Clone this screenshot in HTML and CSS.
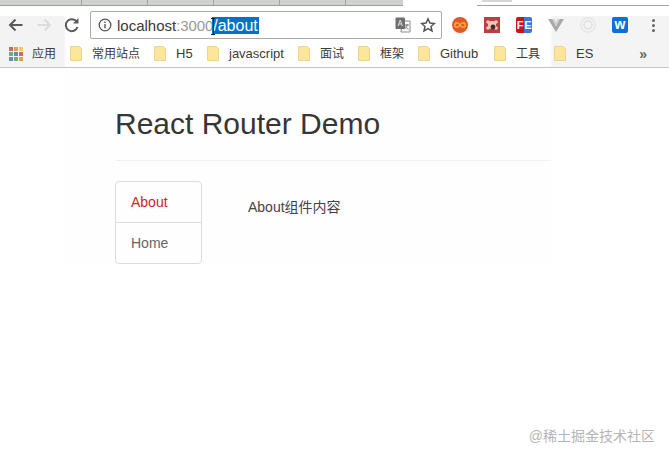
FILE: index.html
```html
<!DOCTYPE html>
<html lang="en">
<head>
<meta charset="utf-8">
<title>React Router Demo</title>
<link rel="stylesheet" href="styles.css">
</head>
<body>
<header class="chrome">
  <div class="tabstrip">
    <span class="tab tab-a"></span><span class="tab tab-b"></span><span class="tab tab-c"></span><span class="tab tab-d"></span><span class="tab tab-e"></span><span class="tab tab-f"></span>
    <span class="tab-active"></span>
    <span class="tab-rest"><span class="tab-mini"></span></span>
  </div>
  <div class="toolbar">
    <svg class="nav" width="18" height="18" viewBox="0 0 18 18"><path d="M15.500 9H3M8.500 3.500 3 9l5.500 5.500" fill="none" stroke="#5a5a5a" stroke-width="2"/></svg>
    <svg class="nav" width="18" height="18" viewBox="0 0 18 18"><path d="M2.500 9H15M9.500 3.500 15 9l-5.500 5.500" fill="none" stroke="#dcdcdc" stroke-width="2"/></svg>
    <svg class="nav" width="18" height="18" viewBox="0 0 18 18"><path d="M14.500 11a6 6 0 1 1-.6-5" fill="none" stroke="#5a5a5a" stroke-width="2"/><path d="M15.500 2v5.500H10z" fill="#5a5a5a"/></svg>
    <div class="omnibox">
      <svg width="14" height="14" viewBox="0 0 14 14"><circle cx="7" cy="7" r="5.800" fill="none" stroke="#555" stroke-width="1.300"/><path d="M7 6v4.200M7 3.600v1.400" stroke="#555" stroke-width="1.400"/></svg>
      <div class="url"><span class="host">localhost</span><span class="port">:3000</span><span class="sel">/about</span><i class="ibeam"></i></div>
      <svg class="translate" width="16" height="16" viewBox="0 0 16 16"><path d="M7 4h8v11H6z" fill="#fff" stroke="#8a8a8a"/><rect x="0.500" y="0.500" width="9.500" height="11.500" rx="1" fill="#6f6f6f"/><path d="M3 9l2.200-6 2.200 6M3.800 7h2.800" fill="none" stroke="#ddd"/><path d="M10 8h4M12 7v1c0 2-1 3.200-2.500 4M10.500 9.500c.5 1.200 1.700 2.200 3 2.800" fill="none" stroke="#777"/></svg>
      <svg width="16" height="16" viewBox="0 0 16 16"><path d="M8 1.800l1.900 4.200 4.500.5-3.400 3 1 4.500L8 11.700 4 14l1-4.500-3.400-3 4.500-.5z" fill="none" stroke="#555" stroke-width="1.500"/></svg>
    </div>
    <div class="extensions">
      <svg width="16" height="16" viewBox="0 0 16 16"><circle cx="8" cy="8" r="8" fill="#e2582a"/><path d="M8 8C7 6.200 6 5.700 5 5.700a2.300 2.300 0 0 0 0 4.600C6 10.300 7 9.800 8 8s2-2.300 3-2.300a2.300 2.300 0 0 1 0 4.600C10 10.300 9 9.800 8 8z" fill="none" stroke="#f7b531" stroke-width="1.400"/></svg>
      <svg width="16" height="16" viewBox="0 0 16 16"><rect width="16" height="16" fill="#b9403f"/><circle cx="8" cy="8" r="4" fill="#ecc8c0"/><circle cx="4" cy="5" r="1.800" fill="#ecc8c0"/><circle cx="12" cy="5" r="1.800" fill="#ecc8c0"/><circle cx="4" cy="11" r="1.800" fill="#ecc8c0"/><circle cx="12" cy="11" r="1.800" fill="#ecc8c0"/><circle cx="9" cy="10" r="2.400" fill="#4a2a28"/></svg>
      <div class="fe"><span class="fe-f">F</span><span class="fe-e">E</span></div>
      <svg width="16" height="16" viewBox="0 0 16 16"><path d="M0 2h5l3 6 3-6h5L8 15z" fill="#a9a9a9"/><path d="M4 2h2.500L8 5l1.500-3H12L8 10z" fill="#d2d2d2"/></svg>
      <svg width="16" height="16" viewBox="0 0 16 16"><circle cx="8" cy="8" r="7.200" fill="none" stroke="#e6e6e6" stroke-width="1.500"/><circle cx="8" cy="8" r="4" fill="none" stroke="#dedede" stroke-width="1.500"/></svg>
      <div class="wbox">w</div>
    </div>
    <div class="menu-dots"><i></i><i></i><i></i></div>
  </div>
  <nav class="bookmarks">
    <div class="apps"><i class="r"></i><i class="o"></i><i class="y"></i><i class="g"></i><i class="b"></i><i class="r"></i><i class="b"></i><i class="g"></i><i class="o"></i></div>
    <span class="label apps-label">应用</span>
    <span class="bm w84"><svg class="folder" viewBox="0 0 12 15"><path d="M.5.500h9l2 2v12H.5z" fill="#fce69e" stroke="#ecd58e"/></svg><span class="label">常用站点</span></span>
    <span class="bm w53"><svg class="folder" viewBox="0 0 12 15"><path d="M.5.500h9l2 2v12H.5z" fill="#fce69e" stroke="#ecd58e"/></svg><span class="label latin">H5</span></span>
    <span class="bm w91"><svg class="folder" viewBox="0 0 12 15"><path d="M.5.500h9l2 2v12H.5z" fill="#fce69e" stroke="#ecd58e"/></svg><span class="label latin">javascript</span></span>
    <span class="bm w60"><svg class="folder" viewBox="0 0 12 15"><path d="M.5.500h9l2 2v12H.5z" fill="#fce69e" stroke="#ecd58e"/></svg><span class="label">面试</span></span>
    <span class="bm w60"><svg class="folder" viewBox="0 0 12 15"><path d="M.5.500h9l2 2v12H.5z" fill="#fce69e" stroke="#ecd58e"/></svg><span class="label">框架</span></span>
    <span class="bm w76"><svg class="folder" viewBox="0 0 12 15"><path d="M.5.500h9l2 2v12H.5z" fill="#fce69e" stroke="#ecd58e"/></svg><span class="label latin">Github</span></span>
    <span class="bm w60"><svg class="folder" viewBox="0 0 12 15"><path d="M.5.500h9l2 2v12H.5z" fill="#fce69e" stroke="#ecd58e"/></svg><span class="label">工具</span></span>
    <span class="bm"><svg class="folder" viewBox="0 0 12 15"><path d="M.5.500h9l2 2v12H.5z" fill="#fce69e" stroke="#ecd58e"/></svg><span class="label latin">ES</span></span>
    <span class="more">»</span>
  </nav>
</header>
<main class="stage">
  <div class="page">
    <h1 class="title">React Router Demo</h1>
    <div class="columns">
      <ul class="side">
        <li class="side-item active">About</li>
        <li class="side-item">Home</li>
      </ul>
      <p class="content">About组件内容</p>
    </div>
  </div>
</main>
<footer class="watermark">@稀土掘金技术社区</footer>
</body>
</html>
```
FILE: styles.css
```css
* { box-sizing: border-box; }
html, body { margin: 0; height: 100%; overflow: hidden; }
body {
  position: relative;
  width: 669px;
  height: 458px;
  background: #fff;
  font-family: "Liberation Sans", "Noto Sans CJK SC", sans-serif;
}
.chrome { height: 68px; border-bottom: 1px solid #c4c4c4; background: #f4f4f4; }
.tabstrip { height: 6px; display: flex; background: #fff; }
.tab { height: 6px; background: #cfd1cf; border-right: 1px solid #a3a3a3; border-bottom: 1px solid #9c9c9c; flex: none; }
.tab-a { width: 82px; }
.tab-b { width: 66px; }
.tab-c { width: 66px; }
.tab-d { width: 66px; }
.tab-e { width: 66px; }
.tab-f { width: 57px; border-right: 0; }
.tab-active { width: 74px; flex: none; background: #fff; }
.tab-rest { flex: 1; height: 6px; padding-left: 5px; background: #fff; border-bottom: 1px solid #a3a3a3; }
.tab-mini { display: block; width: 30px; height: 2px; background: #d5d5d5; }
.toolbar {
  height: 36px;
  padding: 2px 0 0 7px;
  display: flex;
  align-items: center;
  background: linear-gradient(#fff 0, #fff 10px, transparent 10px), linear-gradient(90deg, #f3f3f3 0, #f3f3f3 64px, #fff 66px, #fff 550px, #f4f4f4 553px);
}
.nav { margin-right: 10px; flex: none; }
.omnibox {
  width: 352px;
  height: 28px;
  margin-left: -1px;
  display: flex;
  align-items: center;
  padding: 0 5px 0 7px;
  background: #fff;
  border: 1px solid #aaa;
  border-radius: 2px;
}
.url { position: relative; flex: 1; margin-left: 5px; font-size: 15px; line-height: 17px; white-space: nowrap; }
.translate { margin-right: 9px; }
.host { color: #3a3a3a; }
.port { color: #9a9a9a; letter-spacing: -0.1px; }
.sel { display: inline-block; background: #0272c8; color: #fff; font-size: 16px; padding: 0 1px; margin-left: -1px; }
.ibeam { position: absolute; left: 94px; top: 1px; width: 4px; height: 17px; background: linear-gradient(#222, #222) center/1px 100% no-repeat, linear-gradient(#222, #222) top/100% 1px no-repeat, linear-gradient(#222, #222) bottom/100% 1px no-repeat; }
.extensions { display: flex; align-items: center; margin-left: 10px; gap: 16px; }
.fe { display: flex; width: 16px; height: 16px; border-radius: 2px; overflow: hidden; font: bold 11px/16px "Liberation Sans", sans-serif; color: #fff; }
.fe-f { width: 8px; background: #c9161d; text-align: center; }
.fe-e { width: 8px; background: #3b78d8; text-align: center; }
.wbox { width: 16px; height: 16px; border-radius: 2px; background: #0f6fd8; color: #fff; font: bold 14px/15px "Liberation Sans", sans-serif; text-align: center; }
.menu-dots { display: flex; flex-direction: column; gap: 2px; margin-left: 24px; }
.menu-dots i { display: block; width: 3px; height: 3px; background: #666; border-radius: 50%; }
.bookmarks {
  height: 25px;
  padding: 0 0 2px 9px;
  display: flex;
  align-items: center;
  background: linear-gradient(90deg, #f3f3f3 0, #f3f3f3 64px, #fff 66px, #fff 550px, #f4f4f4 553px);
}
.apps { display: grid; grid-template-columns: repeat(3, 4px); gap: 1px; margin-right: 9px; flex: none; }
.apps i { width: 4px; height: 4px; display: block; }
.r { background: #cf6a64; } .o { background: #dba35a; } .y { background: #e3cb67; } .g { background: #6fae74; } .b { background: #6688c4; }
.label { font-size: 12px; line-height: 16px; color: #3a3a3a; white-space: nowrap; }
.latin { font-size: 13px; }
.apps-label { width: 38px; flex: none; }
.bm { display: flex; align-items: center; gap: 10px; flex: none; }
.w84 { width: 84px; } .w53 { width: 53px; } .w91 { width: 91px; } .w60 { width: 60px; } .w76 { width: 76px; }
.folder { display: block; width: 12px; height: 15px; flex: none; }
.more { margin-left: 46px; font-size: 14px; font-weight: 700; line-height: 16px; color: #666; }
.stage { width: 487px; height: 197px; margin-left: 65px; padding-left: 50px; background: #fefefe; }
.page { width: 436px; }
.title { margin: 0; height: 93px; padding-top: 38px; font-size: 30px; font-weight: 400; line-height: 36px; color: #363636; border-bottom: 1px solid #f1f1f1; }
.columns { display: flex; margin-top: 20px; }
.side { list-style: none; margin: 0; padding: 0; width: 87px; height: 83px; border: 1px solid #ddd; border-radius: 4px; }
.side-item { height: 41px; padding-left: 15px; font-size: 14px; line-height: 40px; color: #666; }
.side-item.active { color: #d4232a; border-bottom: 1px solid #ddd; }
.content { margin: 17px 0 0 46px; font-size: 14px; line-height: 18px; color: #444; }
.watermark { position: absolute; right: 14px; bottom: 13px; font-size: 14px; line-height: 18px; color: #b5b5b5; }
```
